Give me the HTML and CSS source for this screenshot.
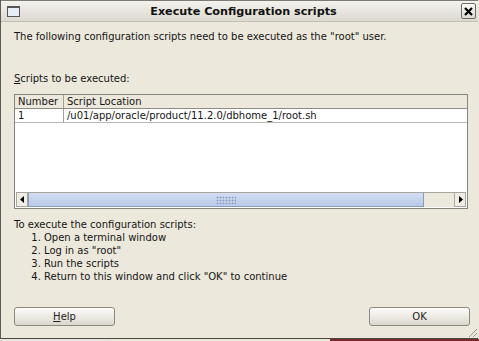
FILE: index.html
```html
<!DOCTYPE html>
<html>
<head>
<meta charset="utf-8">
<link rel="stylesheet" href="styles.css">
</head>
<body>
<div class="window">
  <div class="titlebar">
    <span class="win-icon"></span>
    <span class="title">Execute Configuration scripts</span>
    <span class="close">
      <svg width="9" height="9" viewBox="0 0 9 9"><path d="M1 1 L8 8 M8 1 L1 8" stroke="#000" stroke-width="2.2"/></svg>
    </span>
  </div>
  <div class="content">
    <p class="intro">The following configuration scripts need to be executed as the "root" user.</p>
    <p class="label"><u>S</u>cripts to be executed:</p>
    <div class="table">
      <div class="thead">
        <div class="c1">Number</div>
        <div class="c2">Script Location</div>
      </div>
      <div class="row">
        <div class="c1">1</div>
        <div class="c2">/u01/app/oracle/product/11.2.0/dbhome_1/root.sh</div>
      </div>
      <div class="spacer"></div>
      <div class="hscroll">
        <div class="arrow"><svg width="5" height="7" viewBox="0 0 5 7"><path d="M4 0 L0 3.5 L4 7 Z" fill="#000"/></svg></div>
        <div class="track">
          <div class="thumb"><span class="grip"></span></div>
          <div class="gap"></div>
        </div>
        <div class="arrow right"><svg width="5" height="7" viewBox="0 0 5 7"><path d="M1 0 L5 3.5 L1 7 Z" fill="#000"/></svg></div>
      </div>
    </div>
    <div class="steps">
      <p>To execute the configuration scripts:</p>
      <ol>
        <li>Open a terminal window</li>
        <li>Log in as "root"</li>
        <li>Run the scripts</li>
        <li>Return to this window and click "OK" to continue</li>
      </ol>
    </div>
    <div class="buttons">
      <button class="btn"><u>H</u>elp</button>
      <button class="btn">OK</button>
    </div>
  </div>
  <div class="grip-corner"></div>
</div>
<div class="taskbar"><span class="tb1"></span><span class="tb2"></span><span class="tb3"></span></div>
</body>
</html>
```
FILE: styles.css
```css
html, body {
  margin: 0;
  padding: 0;
  background: #ece9dc;
  width: 479px;
  height: 341px;
  overflow: hidden;
}
body {
  font-family: "DejaVu Sans", sans-serif;
  font-size: 10px;
  color: #151515;
}
.window {
  position: relative;
  width: 478px;
  height: 339px;
  border-left: 1px solid #5a5a55;
  border-bottom: 1px solid #4a4a45;
  box-sizing: border-box;
  display: flex;
  flex-direction: column;
  background: #ece9dc;
}
.titlebar {
  height: 22px;
  flex: none;
  display: flex;
  align-items: center;
  position: relative;
  border-top: 1px solid #7f7c74;
  border-bottom: 1px solid #c2bfb5;
  background: linear-gradient(#f3f2ee, #dcd9d0);
  box-sizing: border-box;
}
.win-icon {
  width: 11px;
  height: 8px;
  margin-left: 6px;
  border: 1px solid #55555a;
  border-top-width: 2px;
  background: #e8ecf4;
}
.title {
  flex: 1;
  text-align: center;
  font-weight: bold;
  font-size: 11.2px;
  color: #111;
  margin-left: 6px;
}
.close {
  width: 13px;
  height: 14px;
  border: 1px solid #6e6c66;
  border-radius: 2px;
  background: linear-gradient(#fafaf8, #dddad2);
  display: flex;
  align-items: center;
  justify-content: center;
  margin-right: 2px;
}
.content {
  flex: 1;
  display: flex;
  flex-direction: column;
  padding: 0 10px 0 13px;
}
p { margin: 0; }
.intro {
  margin-top: 8px;
  height: 13px;
  line-height: 13px;
}
.label {
  margin-top: 29px;
  height: 13px;
  line-height: 13px;
}
.table {
  margin-top: 9px;
  width: 454px;
  height: 115px;
  border: 1px solid #85847e;
  box-sizing: border-box;
  background: #fff;
  display: flex;
  flex-direction: column;
}
.thead {
  display: flex;
  height: 14px;
  line-height: 13px;
  background: #ece9dc;
  border-bottom: 1px solid #8d8c86;
  box-sizing: border-box;
}
.row {
  display: flex;
  height: 14px;
  line-height: 13px;
  border-bottom: 1px solid #b8b8b2;
  box-sizing: border-box;
}
.c1 {
  width: 49px;
  padding-left: 3px;
  box-sizing: border-box;
  border-right: 1px solid #a0a09a;
}
.c2 {
  flex: 1;
  padding-left: 3px;
}
.spacer { flex: 1; }
.hscroll {
  height: 15px;
  flex: none;
  display: flex;
  border-top: 1px solid #a5a49e;
  box-sizing: border-box;
  background: #ece9dc;
  margin: 0 1px 1px 1px;
}
.arrow {
  width: 12px;
  flex: none;
  display: flex;
  align-items: center;
  justify-content: center;
  border: 1px solid #a8a7a0;
  border-top: none;
  box-sizing: border-box;
  background: #efede4;
}
.track {
  flex: 1;
  display: flex;
  background: #ece9dc;
}
.thumb {
  width: 396px;
  flex: none;
  background: linear-gradient(#d4def2, #b9c9e8);
  border: 1px solid #8a9bc0;
  border-top: none;
  box-sizing: border-box;
  display: flex;
  align-items: center;
  justify-content: center;
}
.gap {
  flex: 1;
  background: #ece9dc;
}
.grip {
  width: 20px;
  height: 8px;
  background-image: radial-gradient(circle, #8597bf 0.8px, transparent 1.1px);
  background-size: 3px 3px;
}
.steps {
  margin-top: 9px;
  line-height: 13px;
}
ol {
  margin: 0;
  padding-left: 30px;
}
li { height: 13px; }
.buttons {
  margin-top: auto;
  margin-bottom: 12px;
  display: flex;
  justify-content: space-between;
  width: 456px;
}
.btn {
  width: 101px;
  height: 19px;
  font-family: "DejaVu Sans", sans-serif;
  font-size: 10px;
  color: #222;
  border: 1px solid #8b8980;
  border-radius: 3px;
  background: linear-gradient(#fbfbf9, #e9e7df 60%, #d9d6cc);
  padding: 0;
}
.grip-corner {
  position: absolute;
  right: 1px;
  bottom: 1px;
  width: 8px;
  height: 8px;
  background: linear-gradient(135deg, transparent 45%, #9a988f 45%, #9a988f 55%, transparent 55%, transparent 70%, #9a988f 70%, #9a988f 80%, transparent 80%);
}
.taskbar {
  height: 2px;
  display: flex;
}
.tb1 { width: 110px; background: #e6e4dc; }
.tb2 { width: 220px; background: #ece9dc; }
.tb3 { flex: 1; background: #7a2a2a; }
```
